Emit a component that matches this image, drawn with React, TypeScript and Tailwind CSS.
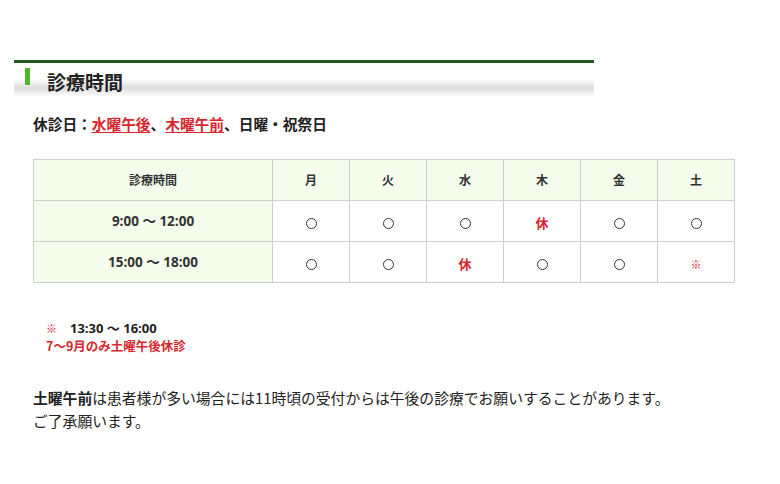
const days = ['月', '火', '水', '木', '金', '土']

const rows = [
  { time: '9:00 〜 12:00', cells: ['○', '○', '○', '休', '○', '○'] },
  { time: '15:00 〜 18:00', cells: ['○', '○', '休', '○', '○', '※'] },
]

const Cell = ({ v }: { v: string }) => {
  if (v === '休') return <span className="text-[13px] font-bold text-[#d8262e]">休</span>
  if (v === '※') return <span className="text-[11px] font-bold text-[#d8262e]">※</span>
  // ○ は小さめの太い丸
  return <span className="inline-block align-middle w-[11px] h-[11px] rounded-full border-[1.6px] border-[#333]" aria-label="○" />
}

export default function App() {
  return (
    <div className="w-[780px] h-[484px] bg-white text-[#222] font-['Noto_Sans_CJK_JP','Noto_Sans',sans-serif]">
      {/* 見出し */}
      <div className="pt-[60px] pl-[14px]">
        <div className="w-[580px] h-[3px] bg-[#1f5a1c]" />
        <div className="w-[580px] h-[30px] mt-[4px] flex items-start bg-[linear-gradient(to_bottom,#fff_0%,#fff_40%,#dcdcdc_70%,#fff_100%)]">
          <div className="ml-[11px] mt-[1px] w-[5px] h-[17px] bg-[#4cb82a]" />
          <h2 className="ml-[17px] mt-[3px] text-[19px] leading-[24px] font-bold text-[#222]">診療時間</h2>
        </div>
      </div>

      <div className="px-[33px]">
        {/* 休診日 */}
        <p className="mt-[17px] text-[14.7px] leading-[20px] font-bold">
          休診日：
          <span className="text-[#d8262e] underline underline-offset-2">水曜午後</span>、
          <span className="text-[#d8262e] underline underline-offset-2">木曜午前</span>、日曜・祝祭日
        </p>

        {/* 診療時間表 */}
        <table className="mt-[25px] w-[701px] table-fixed border-collapse">
          <colgroup>
            <col className="w-[239px]" />
            {days.map(d => <col key={d} className="w-[77px]" />)}
          </colgroup>
          <thead>
            <tr className="h-[41px] bg-[#f4fcec]">
              <th className="border border-[#cfcfcf] text-[12px] font-bold text-[#333]">診療時間</th>
              {days.map(d => (
                <th key={d} className="border border-[#cfcfcf] text-[12px] font-bold text-[#333]">{d}</th>
              ))}
            </tr>
          </thead>
          <tbody>
            {rows.map(r => (
              <tr key={r.time} className="h-[41px]">
                <td className="border border-[#cfcfcf] bg-[#f4fcec] text-center text-[13.5px] font-bold text-[#333] font-['Open_Sans','Noto_Sans_CJK_JP',sans-serif]">{r.time}</td>
                {r.cells.map((c, i) => (
                  <td key={i} className="border border-[#cfcfcf] text-center">
                    <Cell v={c} />
                  </td>
                ))}
              </tr>
            ))}
          </tbody>
        </table>

        {/* 注記 */}
        <div className="mt-[36px] pl-[13px] text-[12.5px] leading-[17px] font-bold">
          <p>
            <span className="text-[11px] text-[#d8262e]">※</span>
            <span className="ml-[13px] text-[13px] text-[#222] font-['Open_Sans','Noto_Sans_CJK_JP',sans-serif]">13:30 〜 16:00</span>
          </p>
          <p className="text-[#d8262e]">7〜9月のみ土曜午後休診</p>
        </div>

        {/* 補足 */}
        <div className="mt-[32px] text-[14.8px] leading-[23px] text-[#222]">
          <p><span className="font-bold">土曜午前</span>は患者様が多い場合には11時頃の受付からは午後の診療でお願いすることがあります。</p>
          <p>ご了承願います。</p>
        </div>
      </div>
    </div>
  )
}
